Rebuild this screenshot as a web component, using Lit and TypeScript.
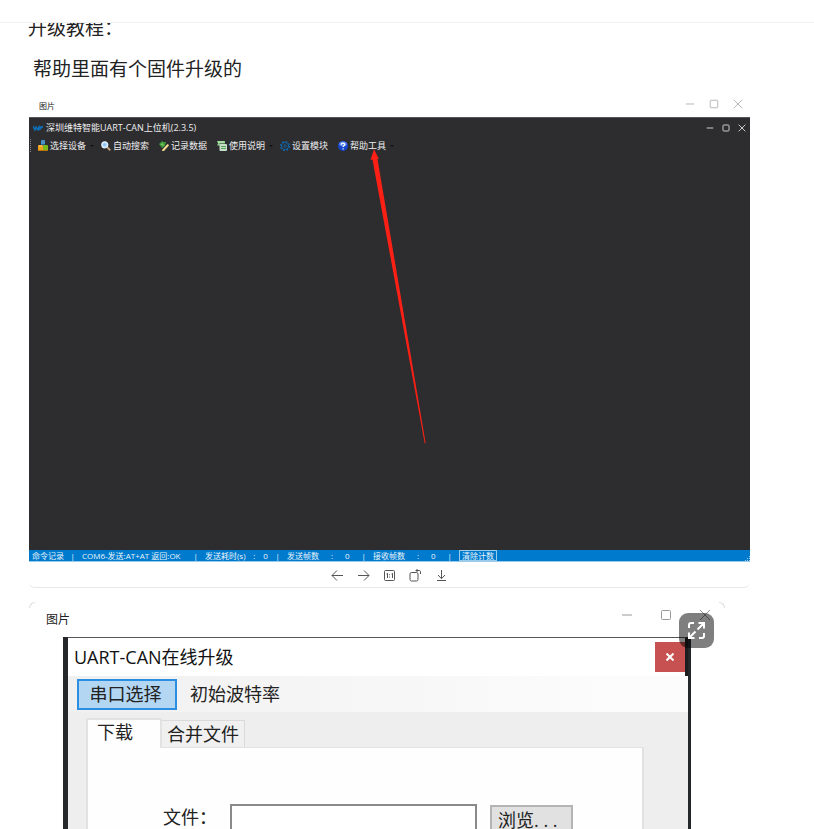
import { LitElement, html, css, svg, nothing } from "lit";
import { customElement } from "lit/decorators.js";

const icons = {
  device: svg`<rect x="3" y="-1" width="4" height="5" rx="1" fill="#4a93c9"/><rect x="3" y="3" width="4" height="2" fill="#27648f"/><rect x="0" y="4" width="5" height="6" rx="1" fill="#f0a11c"/><rect x="5" y="4" width="5" height="6" rx="1" fill="#7dbb1c"/><path d="M0 9.500h10" stroke="#b9730b"/><path d="M1 5h3" stroke="#ffd36b"/>`,
  search: svg`<path d="M6 6l3.300 3.300" stroke="#c4a583" stroke-width="1.800"/><circle cx="3.800" cy="3.800" r="3" fill="#b8dcff" stroke="#e9f2fb" stroke-width="1.200"/><circle cx="3.600" cy="3.600" r="1.500" fill="#8ec5f5"/>`,
  record: svg`<path d="M0 3l3-3 1.500 1H7L6 5 3 7z" fill="#3d9a3a"/><path d="M1 3.500l3-1.500 1 3z" fill="#77c45e"/><path d="M3 9l5.500-6L10 4.500 5 10H3z" fill="#e8cf7a"/><path d="M4 9l5-5.300" stroke="#fff3c2" stroke-width=".8"/>`,
  manual: svg`<path d="M0 0h8v2.500H2.500l1 2H0l1-2z" fill="#8ccf87"/><rect x="2.500" y="3" width="7.500" height="7" rx="1" fill="#c9dec9"/><path d="M4 5.500h5M4 7.500h5" stroke="#56a35c"/><path d="M1 1h6" stroke="#d8f2d2" stroke-width=".8"/>`,
  gear: svg`<circle cx="5" cy="5" r="4.500" fill="none" stroke="#0f6bb4" stroke-width="1.200" stroke-dasharray="1.767 1.767"/><circle cx="5" cy="5" r="3.600" fill="none" stroke="#0f6bb4" stroke-width=".9"/><circle cx="5" cy="5" r="1.300" fill="none" stroke="#0f6bb4" stroke-width=".7"/>`,
  help: svg`<circle cx="5" cy="5" r="5" fill="#1746c9"/><ellipse cx="5" cy="3" rx="3.800" ry="2.400" fill="#5f8bf2"/><path d="M3.300 3.800c0-2.300 3.500-2.200 3.500-.2 0 1.200-1.700 1.200-1.700 2.500M5.100 7.300v1.200" stroke="#fff" stroke-width="1.200" fill="none"/>`,
};

const viewerIcons: [string, unknown][] = [
  ["上一张", svg`<path d="M12 6.500H1M6 1.500l-5 5 5 5"/>`],
  ["下一张", svg`<path d="M1 6.500h11M7 1.500l5 5-5 5"/>`],
  ["原始大小", svg`<rect x="1.500" y="1.500" width="10" height="10" rx="1"/><path d="M3.500 5l1-.7V9M8.500 5l1-.7V9M6.500 5.300v.9M6.500 7.600v.9"/>`],
  ["旋转", svg`<rect x="1" y="3.500" width="8" height="8.500" rx="1.500"/><path d="M7 1.500h3c1 0 1.500.6 1.500 1.500v2M8.500 0L7 1.500 8.500 3"/>`],
  ["下载", svg`<path d="M6.500 1v8.500M3 6l3.500 3.700L10 6M2 11.500h9"/>`],
];

const menu = [
  { icon: icons.device, label: "选择设备", drop: true },
  { icon: icons.search, label: "自动搜索", drop: false },
  { icon: icons.record, label: "记录数据", drop: false },
  { icon: icons.manual, label: "使用说明", drop: true },
  { icon: icons.gear, label: "设置模块", drop: false },
  { icon: icons.help, label: "帮助工具", drop: true },
];

const controls = () => html`
  <div class="controls">
    <button aria-label="最小化"><svg viewBox="0 0 12 12"><path d="M1 6h10"/></svg></button>
    <button aria-label="最大化"><svg viewBox="0 0 12 12"><rect x="1.500" y="1.500" width="9" height="9" rx="1"/></svg></button>
    <button aria-label="关闭"><svg viewBox="0 0 12 12"><path d="M1 1l10 10M11 1L1 11"/></svg></button>
  </div>`;

const shared = css`
  * { box-sizing: border-box; }
  button, input { font: inherit; color: inherit; margin: 0; padding: 0; border: 0; background: none; border-radius: 0; white-space: nowrap; }
  svg { display: block; }
  .controls { display: flex; margin-left: auto; }
  .controls svg { width: 100%; height: 100%; fill: none; stroke: currentColor; }
`;

@customElement("can-host-window")
class CanHostWindow extends LitElement {
  static styles = [shared, css`
    :host { display: flex; flex-direction: column; position: relative; aspect-ratio: 721 / 445; background: #2d2d30; color: #eee; border-top: 1px solid #55555a; font-size: 9px; line-height: 12px; }
    .title { display: flex; align-items: center; height: 19px; padding: 0 4px; gap: 3px; white-space: nowrap; }
    .logo { width: 10px; height: 6px; fill: none; stroke: #0b6fb8; stroke-width: 1.5; }
    .controls { gap: 8px; color: #ccc; }
    .controls button { width: 8px; height: 8px; }
    .controls svg { stroke-width: 1.5; }
    .menu { display: flex; align-items: center; gap: 10px; height: 18px; padding-left: 1px; }
    .grip { width: 1px; height: 14px; margin-right: -3px; background: repeating-linear-gradient(#89898d 0 1px, transparent 1px 2px); }
    .item { display: flex; align-items: center; gap: 2px; }
    .item svg { width: 10px; height: 10px; overflow: visible; }
    .caret { border: 2px solid transparent; border-top-color: #111; border-bottom: 0; margin: 0 -3px 0 2px; }
    .arrow { position: absolute; left: 47%; top: 7%; width: 8%; overflow: visible; fill: #fb2015; }
    .status { display: flex; align-items: center; gap: 7px; height: 12px; margin-top: auto; padding: 0 0 0 3px; background: #007acc; border-bottom: 1px solid #9bcbea; color: #e8f4fc; font-size: 8px; line-height: 10px; white-space: nowrap; }
    .field { display: flex; justify-content: space-between; }
    .record { width: 43px; }
    .command { width: 116px; }
    .time { width: 75px; }
    .count { width: 79px; }
    .clear { border: 1px solid #9bcbea; padding: 0 2px; height: 11px; line-height: 9px; }
    .size { width: 5px; height: 5px; margin: auto 0 0 auto; fill: #9bcbea; }
  `];

  render() {
    return html`
      <div class="title">
        <svg class="logo" viewBox="0 0 10 6"><path d="M0 1l2 4 1-3 2 3 1-3 1 3M6 2h4M7 4l3-3"/></svg>
        <span>深圳维特智能UART-CAN上位机(2.3.5)</span>
        ${controls()}
      </div>
      <nav class="menu">
        <span class="grip"></span>
        ${menu.map((m) => html`<button class="item"><svg viewBox="0 0 10 10">${m.icon}</svg><span>${m.label}</span>${m.drop ? html`<i class="caret"></i>` : nothing}</button>`)}
      </nav>
      <svg class="arrow" viewBox="0 0 58 296"><path d="M6 0l5 10-1.500-.3L58 296h-1L4.500 10.500 2.500 11z"/></svg>
      <div class="status">
        <span class="field record"><span>命令记录</span><span>|</span></span>
        <span class="field command"><span>COM6-发送:AT+AT 返回:OK</span><span>|</span></span>
        <span class="field time"><span>发送耗时(s)</span><span>:</span><span>0</span><span>|</span></span>
        <span class="field count"><span>发送帧数</span><span>:</span><span>0</span><span>|</span></span>
        <span class="field count"><span>接收帧数</span><span>:</span><span>0</span><span>|</span></span>
        <button class="clear">清除计数</button>
        <svg class="size" viewBox="0 0 5 5"><path d="M4 0h1v1H4zM4 2h1v1H4zM2 2h1v1H2zM4 4h1v1H4zM2 4h1v1H2zM0 4h1v1H0z"/></svg>
      </div>`;
  }
}

@customElement("upgrade-dialog")
class UpgradeDialog extends LitElement {
  static styles = [shared, css`
    :host { display: block; background: #eee; border: solid #25272b; border-width: 0 3px 0 5px; color: #222; font-size: 18px; line-height: 24px; }
    .title { display: flex; align-items: center; height: 39px; padding-left: 6px; background: #fff; border-top: 1px solid #555; border-right: 3px solid #1d1d1f; color: #111; }
    .close { width: 30px; height: 30px; margin-left: auto; background: #c75050; display: grid; place-items: center; }
    .close svg { width: 8px; height: 8px; stroke: #fff; stroke-width: 2; }
    .tools { display: flex; align-items: center; gap: 13px; height: 36px; padding-left: 9px; background: linear-gradient(90deg, #f0f0f0, #fcfcfc 90%); }
    .port { width: 100px; height: 31px; background: #b3d7f3; border: 2px solid #2a8fe0; padding-right: 3px; }
    .tabs { display: flex; align-items: flex-end; height: 35px; padding-left: 18px; }
    .tab { height: 27px; padding: 0 5px; border: 1px solid #dadada; border-width: 1px 1px 0 0; background: #f0f0f0; }
    .tab.on { position: relative; width: 76px; height: 30px; margin-bottom: -1px; padding: 0 0 4px 9px; text-align: left; background: #fefefe; border: 2px solid #e2e2e2; border-bottom: 0; }
    .panel { margin: 0 44px 0 18px; height: 220px; padding-top: 56px; border: 2px solid #e2e2e2; border-top-width: 1px; background: #fefefe; }
    .row { display: flex; align-items: flex-start; padding-left: 75px; }
    .row label { width: 67px; line-height: 26px; white-space: nowrap; }
    .path { flex: 0 1 247px; min-width: 0; height: 32px; border: 2px solid #8a8a8a; background: #fff; padding: 0 6px; margin-right: 13px; }
    .browse { width: 83px; height: 32px; margin-top: 1px; background: #e1e1e1; border: 2px solid #b4b4b4; padding: 0 0 2px 6px; text-align: left; }
  `];

  render() {
    return html`
      <div class="title"><span>UART-CAN在线升级</span>
        <button class="close" aria-label="关闭"><svg viewBox="0 0 8 8"><path d="M0.500 0.500l7 7M7.500 0.500l-7 7"/></svg></button>
      </div>
      <div class="tools"><button class="port">串口选择</button><button>初始波特率</button></div>
      <div class="tabs" role="tablist">
        <button class="tab on" role="tab" aria-selected="true">下载</button>
        <button class="tab" role="tab" aria-selected="false">合并文件</button>
      </div>
      <div class="panel"><div class="row">
        <label for="file">文件：</label><input class="path" id="file" type="text">
        <button class="browse">浏览. . .</button>
      </div></div>`;
  }
}

@customElement("app-root")
class AppRoot extends LitElement {
  static styles = [shared, css`
    :host { display: flex; flex-direction: column; height: 100vh; overflow: hidden; background: #fff; color: #222; font-family: "Open Sans", "Noto Sans CJK SC", sans-serif; }
    header { flex: none; height: 23px; background: #fff; border-bottom: 1px solid #f0f0f0; }
    main { flex: 1; min-height: 0; overflow: hidden; padding: 0 64px 0 28px; }
    p { margin: 0; font-size: 19px; line-height: 28px; white-space: pre-wrap; }
    .lead { margin: -9px 0 13px; }
    figure { position: relative; margin: 14px 0 0 1px; border-bottom: 1px solid #e8e8e8; border-radius: 6px; }
    .bar { display: flex; }
    .caption { color: #222; }
    .wide .bar { height: 20px; padding: 0 7px 0 10px; font-size: 8px; line-height: 18px; align-items: flex-start; color: #aaa; }
    .wide .controls { gap: 14px; padding-top: 2px; }
    .wide .controls button { width: 10px; height: 10px; }
    .viewer { display: flex; justify-content: center; gap: 13px; height: 25px; padding-top: 7px; }
    .viewer button { width: 13px; height: 13px; }
    .viewer svg { width: 13px; height: 13px; fill: none; stroke: #555; }
    .small { max-width: 696px; border-top: 1px solid transparent; }
    .small .bar { height: 34px; padding: 0 14px 0 17px; font-size: 12px; line-height: 34px; color: #999; }
    .small .controls { gap: 27px; padding-top: 6px; }
    .small .controls button { width: 12px; height: 12px; }
    .small .body { margin: 0 34px; }
    .corner { position: absolute; top: -1px; width: 6px; height: 6px; border: 1px solid #ddd; border-width: 1px 0 0 1px; border-radius: 6px 0 0 0; left: 0; }
    .corner.right { left: auto; right: 0; border-width: 1px 1px 0 0; border-radius: 0 6px 0 0; }
    .expand { position: absolute; right: 11px; top: 10px; width: 35px; height: 35px; border-radius: 9px; background: rgba(0, 0, 0, 0.5); display: grid; place-items: center; }
    .expand svg { width: 17px; height: 17px; fill: none; stroke: #fff; stroke-width: 2; }
  `];

  render() {
    return html`
      <header></header>
      <main>
        <p class="lead">升级教程：</p>
        <p> 帮助里面有个固件升级的</p>
        <figure class="wide">
          <div class="bar"><span class="caption">图片</span>${controls()}</div>
          <can-host-window></can-host-window>
          <div class="viewer">
            ${viewerIcons.map(([name, shape]) => html`<button aria-label=${name}><svg viewBox="0 0 13 13">${shape}</svg></button>`)}
          </div>
        </figure>
        <figure class="small">
          <span class="corner"></span><span class="corner right"></span>
          <div class="bar"><span class="caption">图片</span>${controls()}</div>
          <upgrade-dialog class="body"></upgrade-dialog>
          <button class="expand" aria-label="全屏"><svg viewBox="0 0 17 17"><path d="M6 1H3Q1 1 1 3V6M10.500 1H16v5.500M16 1L9.500 7.500M1 10.500V16h5.500M1 16l6.500-6.500M11 16h3q2 0 2-2V11"/></svg></button>
        </figure>
      </main>`;
  }
}
